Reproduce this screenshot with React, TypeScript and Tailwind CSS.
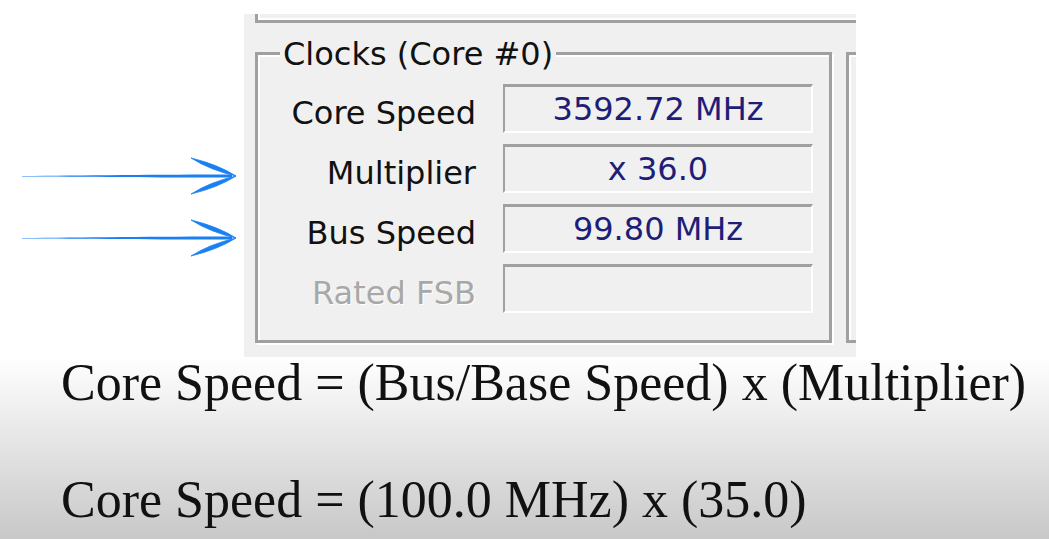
import React from "react";

const rows = [
  { label: "Core Speed", value: "3592.72 MHz" },
  { label: "Multiplier", value: "x 36.0" },
  { label: "Bus Speed", value: "99.80 MHz" },
  { label: "Rated FSB", value: "", disabled: true },
];

function Arrow() {
  return (
    <svg width="240" height="40" viewBox="0 0 240 40" className="block">
      <path
        d="M22 20 C 80 19.3, 160 18.4, 232 18.4 L 232 21.6 C 160 21.6, 80 20.9, 22 20.5 Z"
        fill="#1a7ff2"
      />
      <path
        d="M191 2 Q 218 8.5 236 20 Q 210 14 191 2 Z M191 38 Q 218 31.5 236 20 Q 210 26 191 38 Z"
        fill="#1a7ff2"
        stroke="#1a7ff2"
        strokeWidth="0.8"
        strokeLinejoin="round"
      />
    </svg>
  );
}

export default function App() {
  return (
    <div className="w-[1049px] h-[539px] overflow-hidden bg-[linear-gradient(to_bottom,#ffffff_0%,#ffffff_66%,#c8c8c8_100%)]">
      <div className="flex">
        <div className="w-[244px] pt-[156px] flex flex-col gap-[22px]">
          <Arrow />
          <Arrow />
        </div>

        <div className="mt-[14px] w-[612px] h-[343px] bg-[#f0f0f0] overflow-hidden font-['DejaVu_Sans',sans-serif] text-[32px]">
          <div className="ml-[11px] -mr-[10px] h-[9px] border-l-[3px] border-b-[3px] border-[#a0a0a0] shadow-[inset_2px_-2px_0_#fff]" />

          <div className="mt-[29px] ml-[11px] flex gap-[14px]">
            <div className="relative w-[577px] h-[291px] shrink-0 border-[3px] border-[#a0a0a0] shadow-[inset_2px_2px_0_#fff,2px_2px_0_#fff]">
              <div className="absolute left-[22px] -top-[19px] px-[3px] bg-[#f0f0f0] leading-[36px] text-[#111]">
                Clocks (Core #0)
              </div>

              <div className="pt-[29px] pr-[16px] flex flex-col gap-[11px]">
                {rows.map((row) => (
                  <div key={row.label} className="flex items-center">
                    <div
                      className={
                        row.disabled
                          ? "w-[218px] pt-2 text-right leading-none text-[#a8a8a8] [text-shadow:1px_1px_0_#fff]"
                          : "w-[218px] pt-2 text-right leading-none text-[#111]"
                      }
                    >
                      {row.label}
                    </div>
                    <div className="ml-[27px] flex-1 h-[49px] flex items-center justify-center border-[2px] border-t-[3px] border-t-[#a0a0a0] border-l-[#a0a0a0] border-b-white border-r-white text-[#1e1e78] leading-none">
                      {row.value}
                    </div>
                  </div>
                ))}
              </div>
            </div>

            <div className="w-[40px] h-[291px] shrink-0 border-[3px] border-[#a0a0a0] shadow-[inset_2px_2px_0_#fff]" />
          </div>
        </div>
      </div>

      <div className="pl-[61px] font-['Liberation_Serif',serif] text-[52px] leading-[52px] text-[#111]">
        <div>Core Speed = (Bus/Base Speed) x (Multiplier)</div>
        <div className="mt-[65px]">Core Speed = (100.0 MHz) x (35.0)</div>
      </div>
    </div>
  );
}
